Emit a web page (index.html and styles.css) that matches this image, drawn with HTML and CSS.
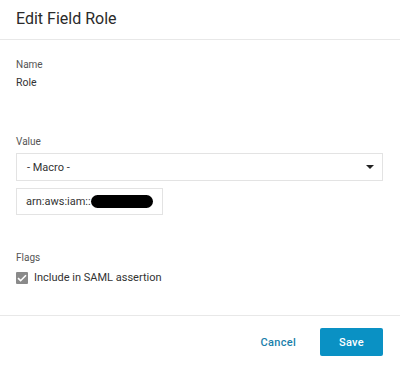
FILE: index.html
```html
<!DOCTYPE html>
<html lang="en">
  <head>
    <meta charset="UTF-8" />
    <title>Edit Field Role</title>
    <link rel="stylesheet" href="styles.css">
  </head>
  <body>
    <div class="modal">
      <div class="modal-header">
        <h1>Edit Field Role</h1>
      </div>

      <div class="modal-body">
        <div class="field">
          <div class="label">Name</div>
          <div class="value">Role</div>
        </div>

        <div class="field field-value">
          <div class="label">Value</div>
          <div class="select">
            <span>- Macro -</span>
            <span class="caret"></span>
          </div>
          <div class="text-input">
            <span>arn:aws:iam::</span>
            <span class="redacted"></span>
          </div>
        </div>

        <div class="field field-flags">
          <div class="label">Flags</div>
          <label class="checkbox">
            <span class="box">
              <svg width="10" height="8" viewBox="0 0 10 8">
                <path d="M1 4.2l2.6 2.5L9 1.2" fill="none" stroke="#fff" stroke-width="1.6" />
              </svg>
            </span>
            Include in SAML assertion
          </label>
        </div>
      </div>

      <div class="modal-footer">
        <button class="btn-link">Cancel</button>
        <button class="btn-primary">Save</button>
      </div>
    </div>
  </body>
</html>
```

FILE: styles.css
```css
:root {
  --text: #333;
  --muted: #555;
  --border: 1px solid #e3e3e3;
  --blue: #0a91c4;
}

body {
  margin: 0;
  background: #fff;
  font-family: Roboto, "Liberation Sans", sans-serif;
  color: var(--text);
}

.modal {
  width: 400px;
  height: 370px;
  display: flex;
  flex-direction: column;
}

.modal-header {
  height: 40px;
  border-bottom: 1px solid #e8e8e8;
  padding: 0 16px;
  display: flex;
  align-items: center;
  box-sizing: border-box;
}

h1 {
  margin: 0;
  font-size: 16px;
  font-weight: 400;
  color: #2a2a2a;
  position: relative;
  top: -1px;
}

.modal-body {
  padding: 18px 16px 0;
  height: 276px;
  box-sizing: border-box;
  border-bottom: 1px solid #e8e8e8;
}

.label {
  font-size: 10px;
  color: var(--muted);
  line-height: 14px;
}

.value {
  font-size: 10.5px;
  margin-top: 4px;
  line-height: 14px;
}

.field-value {
  margin-top: 45px;
}

.select {
  margin-top: 4px;
  height: 28px;
  border: var(--border);
  box-sizing: border-box;
  display: flex;
  align-items: center;
  justify-content: space-between;
  padding: 0 8px 0 10px;
  font-size: 11px;
  width: 367px;
}

.caret {
  width: 0;
  height: 0;
  border-left: 4px solid transparent;
  border-right: 4px solid transparent;
  border-top: 4px solid #222;
}

.text-input {
  margin-top: 7px;
  width: 147px;
  height: 27px;
  border: var(--border);
  box-sizing: border-box;
  display: flex;
  align-items: center;
  padding: 0 9px;
  font-size: 11px;
}

.redacted {
  width: 70px;
  height: 13px;
  background: #000;
  border-radius: 7px;
  margin-left: 0;
}

.field-flags {
  margin-top: 36px;
}

.checkbox {
  margin-top: 6px;
  display: flex;
  align-items: center;
  gap: 6px;
  font-size: 11px;
  color: var(--text);
}

.box {
  width: 12px;
  height: 12px;
  background: #8a8a8a;
  border-radius: 1px;
  display: flex;
  align-items: center;
  justify-content: center;
}

.modal-footer {
  display: flex;
  justify-content: flex-end;
  align-items: center;
  gap: 24px;
  padding: 12px 17px 0 0;
}

button {
  font-family: Roboto, "Liberation Sans", sans-serif;
  font-size: 11px;
  font-weight: 500;
  cursor: pointer;
  letter-spacing: 0.3px;
}

.btn-link {
  background: none;
  border: none;
  color: #1a7fab;
  padding: 0;
}

.btn-primary {
  width: 63px;
  height: 28px;
  background: var(--blue);
  color: #fff;
  border: none;
  border-radius: 2px;
}
```
